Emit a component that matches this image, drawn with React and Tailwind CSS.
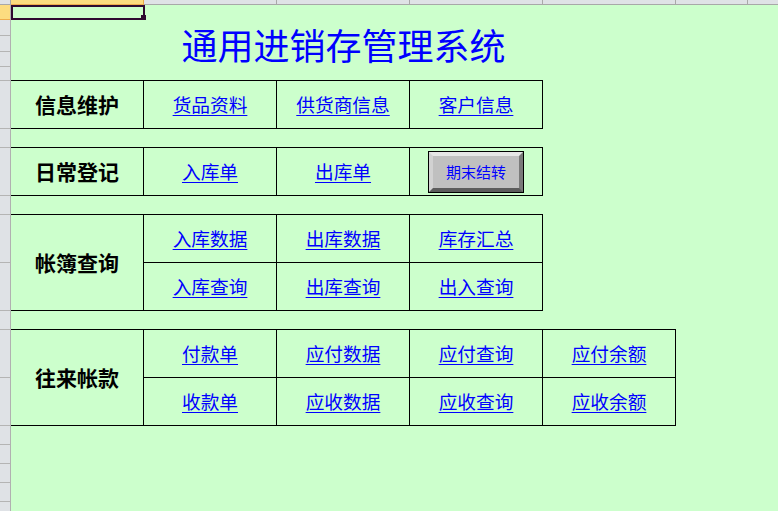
const COLS = [
  { name: "A", w: 133, active: true },
  { name: "B", w: 133 },
  { name: "C", w: 133 },
  { name: "D", w: 133 },
  { name: "E", w: 133 },
  { name: "F", w: 72 },
  { name: "G", w: 200 },
];

// row heights include the 1px bottom line
const ROWS = [15, 16, 16, 15, 14, 48, 19, 48, 19, 48, 48, 19, 48, 48, 19, 19, 19, 19, 19];

const COL_W = {
  133: "w-[133px]",
  72: "w-[72px]",
  200: "w-[200px]",
};

const ROW_H = {
  14: "h-[14px]",
  15: "h-[15px]",
  16: "h-[16px]",
  19: "h-[19px]",
  48: "h-[48px]",
};

function Link({ children }) {
  return (
    <span className="text-[#0000ff] underline decoration-1 underline-offset-[3px] text-[18.7px] leading-none cursor-pointer">
      {children}
    </span>
  );
}

function Cell({ children, className = "" }) {
  return (
    <div
      className={
        "w-[133px] shrink-0 border-r border-black flex items-center justify-center " +
        className
      }
    >
      {children}
    </div>
  );
}

function Label({ children }) {
  return (
    <span className="text-black font-bold text-[21px] leading-none">{children}</span>
  );
}

function BevelButton({ children }) {
  return (
    <div className="border border-black">
      <div className="w-[94px] h-[40px] bg-[#c0c0c0] border-[4px] border-t-[#e6e6e6] border-l-[#d2d2d2] border-r-[#7a7a7a] border-b-[#5c5c5c] flex items-center justify-center">
        <span className="text-[#0000ff] text-[15px] leading-none">{children}</span>
      </div>
    </div>
  );
}

function ColumnHeader() {
  return (
    <div className="flex h-[5px] shrink-0 overflow-hidden">
      <div className="w-[11px] shrink-0 bg-[#dfe2e6] border-r border-b border-[#a8a8a8]" />
      {COLS.map((c) => (
        <div
          key={c.name}
          className={
            COL_W[c.w] +
            " shrink-0 border-r border-b " +
            (c.active
              ? "bg-[#fcdc80] border-r-[#e8a848] border-b-[#eeac4c]"
              : "bg-[#dfe2e6] border-[#a8a8a8]")
          }
        />
      ))}
    </div>
  );
}

function RowHeader() {
  return (
    <div className="w-[11px] shrink-0 flex flex-col bg-[#dfe2e6] border-r border-[#b0b0b0]">
      {ROWS.map((h, i) => (
        <div
          key={i}
          className={
            ROW_H[h] +
            " shrink-0 border-b " +
            (i === 0 ? "bg-[#fcdc80] border-[#eeac4c]" : "border-[#b4b4b4]")
          }
        />
      ))}
    </div>
  );
}

export default function App() {
  return (
    <div className="w-[778px] h-[511px] overflow-hidden bg-[#ccffcc] flex flex-col font-['Noto_Sans_CJK_SC',sans-serif]">
      <ColumnHeader />
      <div className="flex flex-1 min-h-0">
        <RowHeader />

        <div className="flex flex-col">
          {/* title block, rows 1-5 */}
          <div className="relative h-[75px] shrink-0 pt-[21px]">
            <div className="absolute left-0 top-0 w-[134px] h-[15px] border-2 border-[#2e0a30]" />
            <div className="absolute left-[130px] top-[10px] w-[5px] h-[5px] bg-[#2e0a30]" />
            <div className="ml-[133px] w-[399px] text-center text-[#0000ff] text-[36px] leading-none">
              通用进销存管理系统
            </div>
          </div>

          {/* 信息维护 */}
          <div className="flex h-[49px] border-y border-black w-[532px]">
            <Cell><Label>信息维护</Label></Cell>
            <Cell><Link>货品资料</Link></Cell>
            <Cell><Link>供货商信息</Link></Cell>
            <Cell><Link>客户信息</Link></Cell>
          </div>

          {/* 日常登记 */}
          <div className="flex h-[49px] mt-[18px] border-y border-black w-[532px]">
            <Cell><Label>日常登记</Label></Cell>
            <Cell><Link>入库单</Link></Cell>
            <Cell><Link>出库单</Link></Cell>
            <Cell><BevelButton>期末结转</BevelButton></Cell>
          </div>

          {/* 帐簿查询 */}
          <div className="flex h-[97px] mt-[18px] border-y border-black w-[532px]">
            <Cell><Label>帐簿查询</Label></Cell>
            <div className="flex flex-col">
              <div className="flex h-[48px] border-b border-black">
                <Cell><Link>入库数据</Link></Cell>
                <Cell><Link>出库数据</Link></Cell>
                <Cell><Link>库存汇总</Link></Cell>
              </div>
              <div className="flex h-[47px]">
                <Cell><Link>入库查询</Link></Cell>
                <Cell><Link>出库查询</Link></Cell>
                <Cell><Link>出入查询</Link></Cell>
              </div>
            </div>
          </div>

          {/* 往来帐款 */}
          <div className="flex h-[97px] mt-[18px] border-y border-black w-[665px]">
            <Cell><Label>往来帐款</Label></Cell>
            <div className="flex flex-col">
              <div className="flex h-[48px] border-b border-black">
                <Cell><Link>付款单</Link></Cell>
                <Cell><Link>应付数据</Link></Cell>
                <Cell><Link>应付查询</Link></Cell>
                <Cell><Link>应付余额</Link></Cell>
              </div>
              <div className="flex h-[47px]">
                <Cell><Link>收款单</Link></Cell>
                <Cell><Link>应收数据</Link></Cell>
                <Cell><Link>应收查询</Link></Cell>
                <Cell><Link>应收余额</Link></Cell>
              </div>
            </div>
          </div>
        </div>
      </div>
    </div>
  );
}
